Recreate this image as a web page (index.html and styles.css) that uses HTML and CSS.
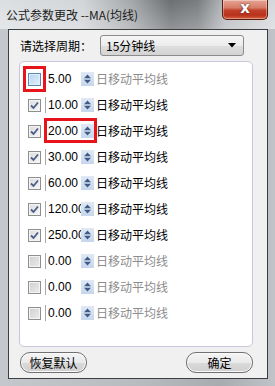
FILE: index.html
```html
<!DOCTYPE html>
<html>
<head>
<meta charset="utf-8">
<link rel="stylesheet" href="styles.css">
</head>
<body>
<div class="window">
  <div class="titlebar">
    <span class="title">公式参数更改 --MA(均线)</span>
    <div class="close">x</div>
  </div>
  <div class="client">
    <div class="period-row">
      <span class="period-label">请选择周期：</span>
      <div class="select">
        <span>15分钟线</span>
        <svg class="select-arrow" width="8" height="5" viewBox="0 0 8 5"><path d="M0 0 H8 L4 4.5 Z" fill="#000"/></svg>
      </div>
    </div>
    <div class="group">
      <div class="row">
        <span class="cb cb-hover"></span>
        <span class="num">5.00</span>
        <span class="spin"><svg width="13" height="14" viewBox="0 0 13 14"><path d="M3 6.2 L6.5 2.5 L10 6.2 Z M3 7.8 L6.5 11.5 L10 7.8 Z" fill="#3f5b86"/></svg></span>
        <span class="label off">日移动平均线</span>
        <span class="mark mark-cb"></span>
      </div>
      <div class="row">
        <span class="cb cb-on"><svg width="11" height="11" viewBox="0 0 11 11"><path d="M2 5.5 L4.5 8 L9 2.5" stroke="#4a5c88" stroke-width="1.8" fill="none"/></svg></span>
        <span class="num">10.00</span>
        <span class="spin"><svg width="13" height="14" viewBox="0 0 13 14"><path d="M3 6.2 L6.5 2.5 L10 6.2 Z M3 7.8 L6.5 11.5 L10 7.8 Z" fill="#3f5b86"/></svg></span>
        <span class="label">日移动平均线</span>
      </div>
      <div class="row">
        <span class="cb cb-on"><svg width="11" height="11" viewBox="0 0 11 11"><path d="M2 5.5 L4.5 8 L9 2.5" stroke="#4a5c88" stroke-width="1.8" fill="none"/></svg></span>
        <span class="num">20.00</span>
        <span class="spin"><svg width="13" height="14" viewBox="0 0 13 14"><path d="M3 6.2 L6.5 2.5 L10 6.2 Z M3 7.8 L6.5 11.5 L10 7.8 Z" fill="#3f5b86"/></svg></span>
        <span class="label">日移动平均线</span>
        <span class="mark mark-num"></span>
      </div>
      <div class="row">
        <span class="cb cb-on"><svg width="11" height="11" viewBox="0 0 11 11"><path d="M2 5.5 L4.5 8 L9 2.5" stroke="#4a5c88" stroke-width="1.8" fill="none"/></svg></span>
        <span class="num">30.00</span>
        <span class="spin"><svg width="13" height="14" viewBox="0 0 13 14"><path d="M3 6.2 L6.5 2.5 L10 6.2 Z M3 7.8 L6.5 11.5 L10 7.8 Z" fill="#3f5b86"/></svg></span>
        <span class="label">日移动平均线</span>
      </div>
      <div class="row">
        <span class="cb cb-on"><svg width="11" height="11" viewBox="0 0 11 11"><path d="M2 5.5 L4.5 8 L9 2.5" stroke="#4a5c88" stroke-width="1.8" fill="none"/></svg></span>
        <span class="num">60.00</span>
        <span class="spin"><svg width="13" height="14" viewBox="0 0 13 14"><path d="M3 6.2 L6.5 2.5 L10 6.2 Z M3 7.8 L6.5 11.5 L10 7.8 Z" fill="#3f5b86"/></svg></span>
        <span class="label">日移动平均线</span>
      </div>
      <div class="row">
        <span class="cb cb-on"><svg width="11" height="11" viewBox="0 0 11 11"><path d="M2 5.5 L4.5 8 L9 2.5" stroke="#4a5c88" stroke-width="1.8" fill="none"/></svg></span>
        <span class="num">120.00</span>
        <span class="spin"><svg width="13" height="14" viewBox="0 0 13 14"><path d="M3 6.2 L6.5 2.5 L10 6.2 Z M3 7.8 L6.5 11.5 L10 7.8 Z" fill="#3f5b86"/></svg></span>
        <span class="label">日移动平均线</span>
      </div>
      <div class="row">
        <span class="cb cb-on"><svg width="11" height="11" viewBox="0 0 11 11"><path d="M2 5.5 L4.5 8 L9 2.5" stroke="#4a5c88" stroke-width="1.8" fill="none"/></svg></span>
        <span class="num">250.00</span>
        <span class="spin"><svg width="13" height="14" viewBox="0 0 13 14"><path d="M3 6.2 L6.5 2.5 L10 6.2 Z M3 7.8 L6.5 11.5 L10 7.8 Z" fill="#3f5b86"/></svg></span>
        <span class="label">日移动平均线</span>
      </div>
      <div class="row">
        <span class="cb cb-off"></span>
        <span class="num">0.00</span>
        <span class="spin"><svg width="13" height="14" viewBox="0 0 13 14"><path d="M3 6.2 L6.5 2.5 L10 6.2 Z M3 7.8 L6.5 11.5 L10 7.8 Z" fill="#3f5b86"/></svg></span>
        <span class="label off">日移动平均线</span>
      </div>
      <div class="row">
        <span class="cb cb-off"></span>
        <span class="num">0.00</span>
        <span class="spin"><svg width="13" height="14" viewBox="0 0 13 14"><path d="M3 6.2 L6.5 2.5 L10 6.2 Z M3 7.8 L6.5 11.5 L10 7.8 Z" fill="#3f5b86"/></svg></span>
        <span class="label off">日移动平均线</span>
      </div>
      <div class="row">
        <span class="cb cb-off"></span>
        <span class="num">0.00</span>
        <span class="spin"><svg width="13" height="14" viewBox="0 0 13 14"><path d="M3 6.2 L6.5 2.5 L10 6.2 Z M3 7.8 L6.5 11.5 L10 7.8 Z" fill="#3f5b86"/></svg></span>
        <span class="label off">日移动平均线</span>
      </div>
    </div>
    <div class="buttons">
      <div class="btn">恢复默认</div>
      <div class="btn">确定</div>
    </div>
  </div>
</div>
</body>
</html>
```

FILE: styles.css
```css
* { box-sizing: border-box; }
html, body { margin: 0; padding: 0; }
body {
  width: 275px;
  height: 386px;
  overflow: hidden;
  font-family: "Noto Sans CJK SC", sans-serif;
  font-size: 12px;
  color: #000;
}
.window {
  width: 275px;
  height: 386px;
  display: flex;
  flex-direction: column;
  background: linear-gradient(to right, #c4c8cc 0%, #b8bcc0 50%, #a8acb0 80%, #c0c4c8 100%);
}
.titlebar {
  height: 29px;
  display: flex;
  align-items: flex-start;
  background:
    linear-gradient(to bottom, rgba(255,255,255,0.0) 0%, rgba(255,255,255,0.25) 100%),
    linear-gradient(to right, #dcdfe2 0%, #d2d5d8 30%, #a4a7aa 48%, #6c6f72 62%, #7a7d80 72%, #b8bbbe 82%, #d6d9dc 100%);
}
.title {
  padding-left: 6px;
  margin-top: 6px;
  font-size: 12px;
  line-height: 17px;
  color: #1c1c1c;
  white-space: nowrap;
}
.close {
  margin-left: auto;
  margin-right: 7px;
  width: 46px;
  height: 20px;
  border: 1px solid #5a1d14;
  border-top: none;
  border-radius: 0 0 5px 5px;
  background: linear-gradient(to bottom, #e6a494 0%, #d77d68 40%, #c0402a 55%, #b8321c 80%, #d8603c 100%);
  box-shadow: inset 0 0 0 1px rgba(255,255,255,0.35);
  color: #fff;
  font-family: "DejaVu Sans", sans-serif;
  font-weight: bold;
  font-size: 15px;
  line-height: 17px;
  text-align: center;
  text-shadow: 0 0 2px #4a0e06;
}
.client {
  flex: 1;
  margin: 0 7px 7px 8px;
  border: 1px solid #3c3f42;
  background: #f0f0f0;
  display: flex;
  flex-direction: column;
}
.period-row {
  display: flex;
  align-items: center;
  margin-top: 5px;
  padding-left: 11px;
  height: 21px;
}
.period-label {
  width: 80px;
  white-space: nowrap;
}
.select {
  width: 144px;
  height: 21px;
  border: 1px solid #8c8c8c;
  border-radius: 3px;
  background: linear-gradient(to bottom, #f6f6f6 0%, #ececec 50%, #dedede 51%, #d4d4d4 100%);
  display: flex;
  align-items: center;
  padding-left: 5px;
  padding-right: 7px;
}
.select span { flex: 1; line-height: 17px; }
.select-arrow { display: block; }
.group {
  margin: 5px 0 0 10px;
  width: 234px;
  height: 286px;
  border: 1px solid #c9c6dd;
  border-radius: 5px;
  background: #fff;
  padding-top: 4px;
}
.row {
  position: relative;
  height: 26px;
  display: flex;
  align-items: center;
  padding-left: 8px;
}
.cb {
  width: 13px;
  height: 13px;
  border: 1px solid #8e8f8f;
  display: flex;
  align-items: center;
  justify-content: center;
  flex: none;
}
.cb svg { display: block; }
.cb-on { background: linear-gradient(135deg, #dcdcdc 0%, #f6f6f6 100%); box-shadow: inset 0 0 0 1px #f4f4f4; }
.cb-off { background: linear-gradient(135deg, #cfcfcf 0%, #ececec 100%); box-shadow: inset 0 0 0 1px #f4f4f4; }
.cb-hover { border-color: #5b87b4; background: linear-gradient(135deg, #b5d3f0 0%, #e4f0fb 100%); box-shadow: inset 0 0 0 1px #def0fe; }
.num {
  margin-left: 4px;
  width: 36px;
  height: 16px;
  border-left: 1px solid #a8a8a8;
  padding-left: 2px;
  font-family: "Liberation Sans", "Noto Sans CJK SC", sans-serif;
  font-size: 12px;
  line-height: 16px;
  white-space: nowrap;
  overflow: hidden;
  flex: none;
}
.spin {
  width: 13px;
  height: 14px;
  background: linear-gradient(to bottom, #e0e9f5 0%, #c6d6ec 100%);
  flex: none;
}
.spin svg { display: block; }
.label {
  margin-left: 2px;
  white-space: nowrap;
  line-height: 16px;
}
.label.off { color: #8c8c8c; }
.mark {
  position: absolute;
  border: 3px solid #e8141c;
  top: 0;
  height: 26px;
}
.mark-cb { left: 3px; width: 23px; }
.mark-num { left: 24px; width: 53px; top: 0; height: 25px; }
.buttons {
  display: flex;
  justify-content: space-between;
  margin: 5px 14px 0 11px;
}
.btn {
  width: 67px;
  height: 21px;
  border: 1px solid #707070;
  border-radius: 10px;
  background: linear-gradient(to bottom, #f4f4f4 0%, #eaeaea 50%, #dadada 51%, #cfcfcf 100%);
  box-shadow: inset 0 0 0 1px #fafafa;
  text-align: center;
  line-height: 19px;
}
```
